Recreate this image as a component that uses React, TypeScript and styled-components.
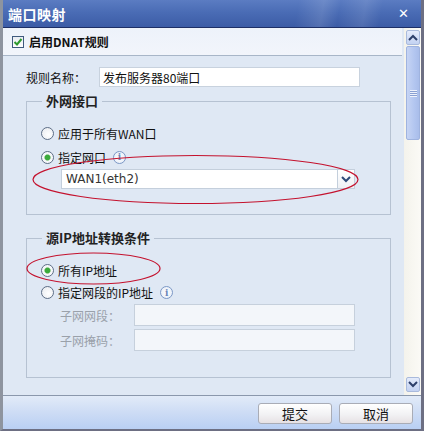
import React from 'react';
import styled, { createGlobalStyle } from 'styled-components';

const GlobalStyle = createGlobalStyle`
  html, body {
    margin: 0;
    padding: 0;
    background: #ffffff;
  }
  * {
    box-sizing: border-box;
  }
`;

const FONT = `"SimSun", "Noto Sans CJK SC", "DejaVu Sans", sans-serif`;

export default function App() {
  return (
    <>
      <GlobalStyle />
      <Window>
        <TitleBar>
          <Title>端口映射</Title>
          <CloseButton>✕</CloseButton>
        </TitleBar>
        <BodyRow>
          <Content>
            <EnableStrip>
              <CheckBox>
                <svg width="10" height="10" viewBox="0 0 10 10">
                  <path d="M1.5 5 L4 7.5 L8.5 2" fill="none" stroke="#2e9a2e" strokeWidth="2" />
                </svg>
              </CheckBox>
              <StripLabel>启用DNAT规则</StripLabel>
            </EnableStrip>

            <NameRow>
              <FieldLabel>规则名称：</FieldLabel>
              <TextInput>发布服务器80端口</TextInput>
            </NameRow>

            <Group $top={7} $height={121}>
              <Legend>外网接口</Legend>
              <RadioRow $h={24}>
                <Radio />
                <span>应用于所有WAN口</span>
              </RadioRow>
              <RadioRow $h={24}>
                <Radio $checked />
                <span>指定网口</span>
                <InfoIcon />
              </RadioRow>
              <Select>
                <SelectText>WAN1(eth2)</SelectText>
                <SelectButton>
                  <svg width="10" height="7" viewBox="0 0 10 7">
                    <path d="M1 1 L5 5 L9 1" fill="none" stroke="#2d4a78" strokeWidth="2" />
                  </svg>
                </SelectButton>
              </Select>
            </Group>

            <Group $top={16} $height={147}>
              <Legend>源IP地址转换条件</Legend>
              <RadioRow $h={22} $mt={14}>
                <Radio $checked />
                <span>所有IP地址</span>
              </RadioRow>
              <RadioRow $h={23}>
                <Radio />
                <span>指定网段的IP地址</span>
                <InfoIcon />
              </RadioRow>
              <SubRow $mt={0}>
                <SubLabel>子网网段：</SubLabel>
                <DisabledInput />
              </SubRow>
              <SubRow $mt={3}>
                <SubLabel>子网掩码：</SubLabel>
                <DisabledInput />
              </SubRow>
            </Group>

            <Marks width="401" height="367" viewBox="0 0 401 367">
              <ellipse cx="192.5" cy="151.5" rx="162.5" ry="24" fill="none" stroke="#c4122e" strokeWidth="1.2" />
              <ellipse cx="90.5" cy="240.5" rx="66.5" ry="15.5" fill="none" stroke="#c4122e" strokeWidth="1.2" />
            </Marks>
          </Content>

          <ScrollBar>
            <ScrollButton>
              <svg width="10" height="7" viewBox="0 0 10 7">
                <path d="M1 6 L5 2 L9 6" fill="none" stroke="#2d3f6a" strokeWidth="2" />
              </svg>
            </ScrollButton>
            <Thumb>
              <Grip />
            </Thumb>
            <Track />
            <ScrollButton>
              <svg width="10" height="7" viewBox="0 0 10 7">
                <path d="M1 1 L5 5 L9 1" fill="none" stroke="#2d3f6a" strokeWidth="2" />
              </svg>
            </ScrollButton>
          </ScrollBar>
        </BodyRow>
        <Footer>
          <Button>提交</Button>
          <Button>取消</Button>
        </Footer>
      </Window>
    </>
  );
}

const Window = styled.div`
  width: 424px;
  height: 431px;
  display: flex;
  flex-direction: column;
  border-left: 3px solid #8e949f;
  border-right: 3px solid #6d6f83;
  border-bottom: 2px solid #6d6f83;
  font-family: ${FONT};
  font-size: 12px;
  color: #111;
`;

const TitleBar = styled.div`
  height: 28px;
  flex: none;
  display: flex;
  align-items: center;
  justify-content: space-between;
  padding: 0 12px 0 5px;
  border-bottom: 1px solid #1d2f66;
  background:
    linear-gradient(100deg, transparent 70%, rgba(255, 255, 255, 0.12) 76%, transparent 80%, rgba(255, 255, 255, 0.1) 86%, transparent 90%),
    linear-gradient(180deg, #5b7cc2 0%, #4a6cb5 45%, #3c5ca6 100%);
`;

const Title = styled.div`
  color: #ffffff;
  font-size: 14px;
  font-weight: bold;
  letter-spacing: 0.5px;
`;

const CloseButton = styled.div`
  color: #ffffff;
  font-size: 13px;
  font-weight: bold;
  font-family: "DejaVu Sans", sans-serif;
`;

const BodyRow = styled.div`
  height: 367px;
  flex: none;
  display: flex;
  background: #dfe8f4;
`;

const Content = styled.div`
  position: relative;
  flex: 1;
  display: flex;
  flex-direction: column;
`;

const EnableStrip = styled.div`
  height: 28px;
  display: flex;
  align-items: center;
  gap: 5px;
  padding-left: 9px;
  margin-right: 2px;
  border-bottom: 1px solid #a8b6c8;
  background: linear-gradient(180deg, #edf2fa 0%, #f2f5fb 100%);
`;

const CheckBox = styled.div`
  width: 12px;
  height: 12px;
  border: 1px solid #3f5a7e;
  background: linear-gradient(180deg, #e8ecf2, #ffffff);
  display: flex;
  align-items: center;
  justify-content: center;
`;

const StripLabel = styled.span`
  font-weight: bold;
  font-size: 12px;
`;

const NameRow = styled.div`
  display: flex;
  align-items: center;
  margin-top: 11px;
  padding-left: 23px;
  height: 20px;
`;

const FieldLabel = styled.span`
  width: 73px;
  font-size: 12px;
`;

const TextInput = styled.div`
  width: 261px;
  height: 20px;
  display: flex;
  align-items: center;
  padding-left: 3px;
  font-size: 12px;
  background: #ffffff;
  border: 1px solid #c8d2de;
`;

const Group = styled.fieldset<{ $top: number; $height: number }>`
  margin: ${(p) => p.$top}px 13px 0 23px;
  height: ${(p) => p.$height}px;
  padding: 0 0 0 14px;
  border: 1px solid #b6c2d2;
  display: flex;
  flex-direction: column;
  min-width: 0;
`;

const Legend = styled.legend`
  margin-left: 1px;
  padding: 0 4px;
  font-weight: bold;
  font-size: 13px;
  line-height: 14px;
  color: #222;
`;

const RadioRow = styled.div<{ $h: number; $mt?: number }>`
  height: ${(p) => p.$h}px;
  margin-top: ${(p) => p.$mt ?? 0}px;
  display: flex;
  align-items: center;
  gap: 4px;
  font-size: 12px;
  &:first-of-type {
    margin-top: ${(p) => p.$mt ?? 13}px;
  }
`;

const Radio = styled.span<{ $checked?: boolean }>`
  width: 13px;
  height: 13px;
  border-radius: 50%;
  border: 1px solid #5d6e86;
  background: ${(p) =>
    p.$checked
      ? 'radial-gradient(circle, #3caa3c 0 2.4px, #9bd39b 3px, #f4f6f8 3.6px, #ffffff 100%)'
      : 'radial-gradient(circle at 60% 60%, #ffffff 0%, #e6e9ee 100%)'};
  flex: none;
`;

const InfoIcon = styled.span`
  width: 13px;
  height: 13px;
  margin-left: 3px;
  border-radius: 50%;
  border: 1px solid #7c98c6;
  background: radial-gradient(circle, #ffffff 0%, #e2eaf6 100%);
  flex: none;
  position: relative;
  &::after {
    content: 'i';
    position: absolute;
    inset: 0;
    display: flex;
    align-items: center;
    justify-content: center;
    font-family: "DejaVu Serif", serif;
    font-weight: bold;
    font-size: 9px;
    color: #6a86b8;
  }
`;

const Select = styled.div`
  margin-left: 20px;
  width: 294px;
  height: 20px;
  display: flex;
  border: 1px solid #c4cfdc;
  background: #ffffff;
`;

const SelectText = styled.div`
  flex: 1;
  display: flex;
  align-items: center;
  padding-left: 4px;
  font-family: "DejaVu Sans", sans-serif;
  font-size: 12px;
  color: #333;
`;

const SelectButton = styled.div`
  width: 17px;
  display: flex;
  align-items: center;
  justify-content: center;
  border-left: 1px solid #c4cfdc;
  background: linear-gradient(180deg, #ffffff, #eef1f5);
`;

const SubRow = styled.div<{ $mt: number }>`
  display: flex;
  align-items: center;
  margin-top: ${(p) => p.$mt}px;
  padding-left: 19px;
  height: 22px;
`;

const SubLabel = styled.span`
  width: 74px;
  color: #9aa1aa;
  font-size: 12px;
`;

const DisabledInput = styled.div`
  width: 221px;
  height: 22px;
  border: 1px solid #c6d0dc;
  background: #f3f6fa;
`;

const Marks = styled.svg`
  position: absolute;
  left: 0;
  top: 0;
  pointer-events: none;
`;

const ScrollBar = styled.div`
  width: 17px;
  flex: none;
  display: flex;
  flex-direction: column;
  padding: 2px 1px 3px 2px;
  background: linear-gradient(90deg, #f4f3ec, #fbfaf6);
`;

const ScrollButton = styled.div`
  height: 15px;
  flex: none;
  display: flex;
  align-items: center;
  justify-content: center;
  border: 1px solid #a9badc;
  border-radius: 2px;
  background: linear-gradient(180deg, #e4ebfb, #c3d2f2);
`;

const Thumb = styled.div`
  height: 94px;
  flex: none;
  margin-top: 1px;
  display: flex;
  align-items: center;
  justify-content: center;
  border: 1px solid #9fb3df;
  border-radius: 2px;
  background: linear-gradient(90deg, #c6d4f4, #b3c6f0 60%, #a9bdea);
`;

const Grip = styled.div`
  width: 7px;
  height: 7px;
  background: repeating-linear-gradient(180deg, #eef2fc 0 1px, #8aa0d2 1px 2px);
`;

const Track = styled.div`
  flex: 1;
`;

const Footer = styled.div`
  flex: 1;
  display: flex;
  align-items: center;
  justify-content: flex-end;
  gap: 7px;
  padding: 0 8px 0 0;
  border-top: 1px solid #8b98ac;
  background: linear-gradient(180deg, #e2ebf8 0%, #cddcf5 50%, #b9cff3 100%);
`;

const Button = styled.button`
  width: 74px;
  height: 21px;
  margin-top: 1px;
  border: 1px solid #a9acb6;
  border-radius: 3px;
  background: linear-gradient(180deg, #ffffff 0%, #f2f2f4 55%, #e6e1e4 100%);
  font-family: ${FONT};
  font-size: 13px;
  color: #111;
  padding: 0;
`;
